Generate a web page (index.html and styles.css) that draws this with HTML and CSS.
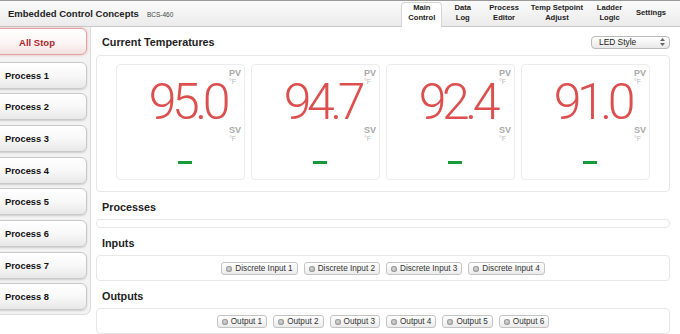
FILE: index.html
```html
<!DOCTYPE html>
<html lang="en">
<head>
<meta charset="utf-8">
<title>BCS-460 Main Control</title>
<link rel="stylesheet" href="styles.css">
</head>
<body>
<header class="topbar">
  <div class="brand"><span class="brand-name">Embedded Control Concepts</span><span class="model">BCS-460</span></div>
  <nav class="tabs">
    <a class="tab active">Main<br>Control</a>
    <a class="tab">Data<br>Log</a>
    <a class="tab">Process<br>Editor</a>
    <a class="tab">Temp Setpoint<br>Adjust</a>
    <a class="tab">Ladder<br>Logic</a>
    <a class="tab">Settings</a>
  </nav>
</header>
<div class="layout">
  <aside class="sidebar">
    <div class="side-btn stop">All Stop</div>
    <div class="proc-list">
      <div class="side-btn">Process 1</div>
      <div class="side-btn">Process 2</div>
      <div class="side-btn">Process 3</div>
      <div class="side-btn">Process 4</div>
      <div class="side-btn">Process 5</div>
      <div class="side-btn">Process 6</div>
      <div class="side-btn">Process 7</div>
      <div class="side-btn">Process 8</div>
    </div>
  </aside>
  <main class="content">
    <div class="section-head">
      <h2>Current Temperatures</h2>
      <div class="select"><span>LED Style</span>
        <svg class="arrows" width="5" height="8" viewBox="0 0 5 8"><path d="M2.5 0 L5 3 L0 3 Z M0 5 L5 5 L2.5 8 Z" fill="#666"/></svg>
      </div>
    </div>
    <div class="panel temps">
      <div class="card">
        <div class="value">95.0</div>
        <div class="label"><div class="lab">PV</div><div class="deg">°F</div></div>
        <div class="sv"></div>
        <div class="label"><div class="lab">SV</div><div class="deg">°F</div></div>
      </div>
      <div class="card">
        <div class="value">94.7</div>
        <div class="label"><div class="lab">PV</div><div class="deg">°F</div></div>
        <div class="sv"></div>
        <div class="label"><div class="lab">SV</div><div class="deg">°F</div></div>
      </div>
      <div class="card">
        <div class="value">92.4</div>
        <div class="label"><div class="lab">PV</div><div class="deg">°F</div></div>
        <div class="sv"></div>
        <div class="label"><div class="lab">SV</div><div class="deg">°F</div></div>
      </div>
      <div class="card">
        <div class="value">91.0</div>
        <div class="label"><div class="lab">PV</div><div class="deg">°F</div></div>
        <div class="sv"></div>
        <div class="label"><div class="lab">SV</div><div class="deg">°F</div></div>
      </div>
    </div>
    <h2 class="section-title">Processes</h2>
    <div class="panel empty"></div>
    <h2 class="section-title">Inputs</h2>
    <div class="panel io">
      <div class="io-btn"><span class="led"></span>Discrete Input 1</div>
      <div class="io-btn"><span class="led"></span>Discrete Input 2</div>
      <div class="io-btn"><span class="led"></span>Discrete Input 3</div>
      <div class="io-btn"><span class="led"></span>Discrete Input 4</div>
    </div>
    <h2 class="section-title">Outputs</h2>
    <div class="panel io">
      <div class="io-btn"><span class="led"></span>Output 1</div>
      <div class="io-btn"><span class="led"></span>Output 2</div>
      <div class="io-btn"><span class="led"></span>Output 3</div>
      <div class="io-btn"><span class="led"></span>Output 4</div>
      <div class="io-btn"><span class="led"></span>Output 5</div>
      <div class="io-btn"><span class="led"></span>Output 6</div>
    </div>
  </main>
</div>
</body>
</html>
```
FILE: styles.css
```css
html, body {
  margin: 0;
  padding: 0;
}
body {
  width: 680px;
  height: 334px;
  overflow: hidden;
  background: #fff;
  color: #222;
  font-family: "Liberation Sans", Arial, Helvetica, sans-serif;
}

/* header */
.topbar {
  height: 27px;
  box-sizing: border-box;
  border-top: 1px solid #9a9a9a;
  border-bottom: 1px solid #c9c9c9;
  background: linear-gradient(#fbfbfb, #ebebeb);
  display: flex;
  align-items: center;
  justify-content: space-between;
}
.brand {
  padding-left: 8px;
  display: flex;
  align-items: baseline;
  gap: 8px;
}
.brand-name {
  font-size: 9.5px;
  font-weight: bold;
  color: #222;
}
.model {
  font-size: 6.5px;
  color: #444;
}
.tabs {
  display: flex;
  align-self: stretch;
  align-items: flex-start;
  padding-right: 8px;
}
.tab {
  min-width: 41px;
  height: 25px;
  margin-top: 1px;
  box-sizing: border-box;
  padding: 0 6px 4px;
  display: flex;
  flex-direction: column;
  justify-content: center;
  text-align: center;
  font-size: 7.6px;
  font-weight: bold;
  line-height: 10px;
  color: #222;
}
.tab.active {
  background: #fff;
  border: 1px solid #d6d6d6;
  border-bottom: none;
  border-radius: 4px 4px 0 0;
}

/* layout */
.layout {
  display: flex;
  align-items: flex-start;
}
.sidebar {
  width: 91px;
  box-sizing: border-box;
  background: #f3f3f3;
  border-right: 1px solid #dcdcdc;
  border-bottom: 1px solid #dcdcdc;
  border-bottom-right-radius: 7px;
  padding: 1px 3px 4px 0;
  display: flex;
  flex-direction: column;
}
.side-btn {
  height: 27px;
  margin-left: -8px;
  box-sizing: border-box;
  border: 1px solid #c9c9c9;
  border-radius: 6px;
  background: linear-gradient(#ffffff, #f8f8f8 50%, #e8e8e8);
  box-shadow: 0 1px 2px rgba(0, 0, 0, 0.16);
  font-size: 9.3px;
  font-weight: bold;
  color: #111;
  padding: 1px 0 0 12px;
  display: flex;
  align-items: center;
}
.side-btn.stop {
  justify-content: center;
  padding: 1px 5px 0 0;
  font-size: 9.5px;
  color: #b0262b;
  border-color: #e2a2a2;
  background: linear-gradient(#ffffff, #fbf4f4 60%, #f1dfdf);
  box-shadow: 0 0 3px rgba(220, 80, 80, 0.45);
}
.proc-list {
  display: flex;
  flex-direction: column;
  gap: 4.67px;
  margin-top: 6.7px;
}

/* main content */
.content {
  flex: 1;
  min-width: 0;
  margin: 0 10px 0 5px;
}
h2 {
  margin: 0;
  font-size: 10.8px;
  font-weight: bold;
  line-height: 13px;
  color: #222;
}
.section-head {
  height: 28px;
  box-sizing: border-box;
  padding-top: 2px;
  display: flex;
  align-items: center;
  justify-content: space-between;
}
.section-head h2 {
  padding-left: 6px;
}
.section-title {
  padding: 8.5px 6px 5.5px;
}
.select {
  width: 79px;
  height: 13px;
  box-sizing: border-box;
  border: 1px solid #bababa;
  border-radius: 4px;
  background: linear-gradient(#ffffff, #e8e8e8);
  font-size: 8.4px;
  color: #222;
  display: flex;
  align-items: center;
  justify-content: space-between;
  padding: 0 4px 0 7px;
}
.arrows {
  display: block;
}

.panel {
  border: 1px solid #e7e7e7;
  border-radius: 4px;
  background: #fff;
}
.temps {
  display: flex;
  justify-content: center;
  gap: 6px;
  padding: 8px 0 11px;
}
.card {
  width: 129px;
  height: 116px;
  box-sizing: border-box;
  border: 1px solid #ececec;
  border-radius: 4px;
  padding: 3px 2px 0 0;
  display: grid;
  grid-template-columns: 1fr 13px;
  grid-template-rows: 57px 1fr;
}
.value {
  font-family: Roboto, "Liberation Sans", Arial, sans-serif;
  font-weight: 300;
  font-size: 50px;
  line-height: 46px;
  margin-top: 11px;
  letter-spacing: -4.5px;
  padding-right: 3px;
  text-align: right;
  white-space: nowrap;
  color: #dc4f4f;
}
.lab {
  font-size: 9px;
  font-weight: bold;
  line-height: 10px;
  color: #a9a9a9;
}
.deg {
  font-size: 7px;
  line-height: 8px;
  color: #b8b8b8;
}
.sv {
  width: 14px;
  height: 3px;
  margin: 36px 0 0 61px;
  background: #18993b;
}
.empty {
  height: 9px;
  box-sizing: border-box;
}
.io {
  display: flex;
  justify-content: center;
  gap: 6px;
  padding: 6px 0 5px;
}
.io-btn {
  height: 13px;
  box-sizing: border-box;
  display: flex;
  align-items: center;
  gap: 3px;
  padding: 0 4px;
  border: 1px solid #c4c4c4;
  border-radius: 3px;
  background: linear-gradient(#ffffff, #ebebeb);
  font-size: 8.2px;
  color: #333;
  white-space: nowrap;
}
.led {
  width: 6px;
  height: 6px;
  border-radius: 50%;
  background: radial-gradient(circle at 40% 35%, #d6d6d6, #a8a8a8);
  box-shadow: inset 0 0 0 1px #9c9c9c;
}
```
